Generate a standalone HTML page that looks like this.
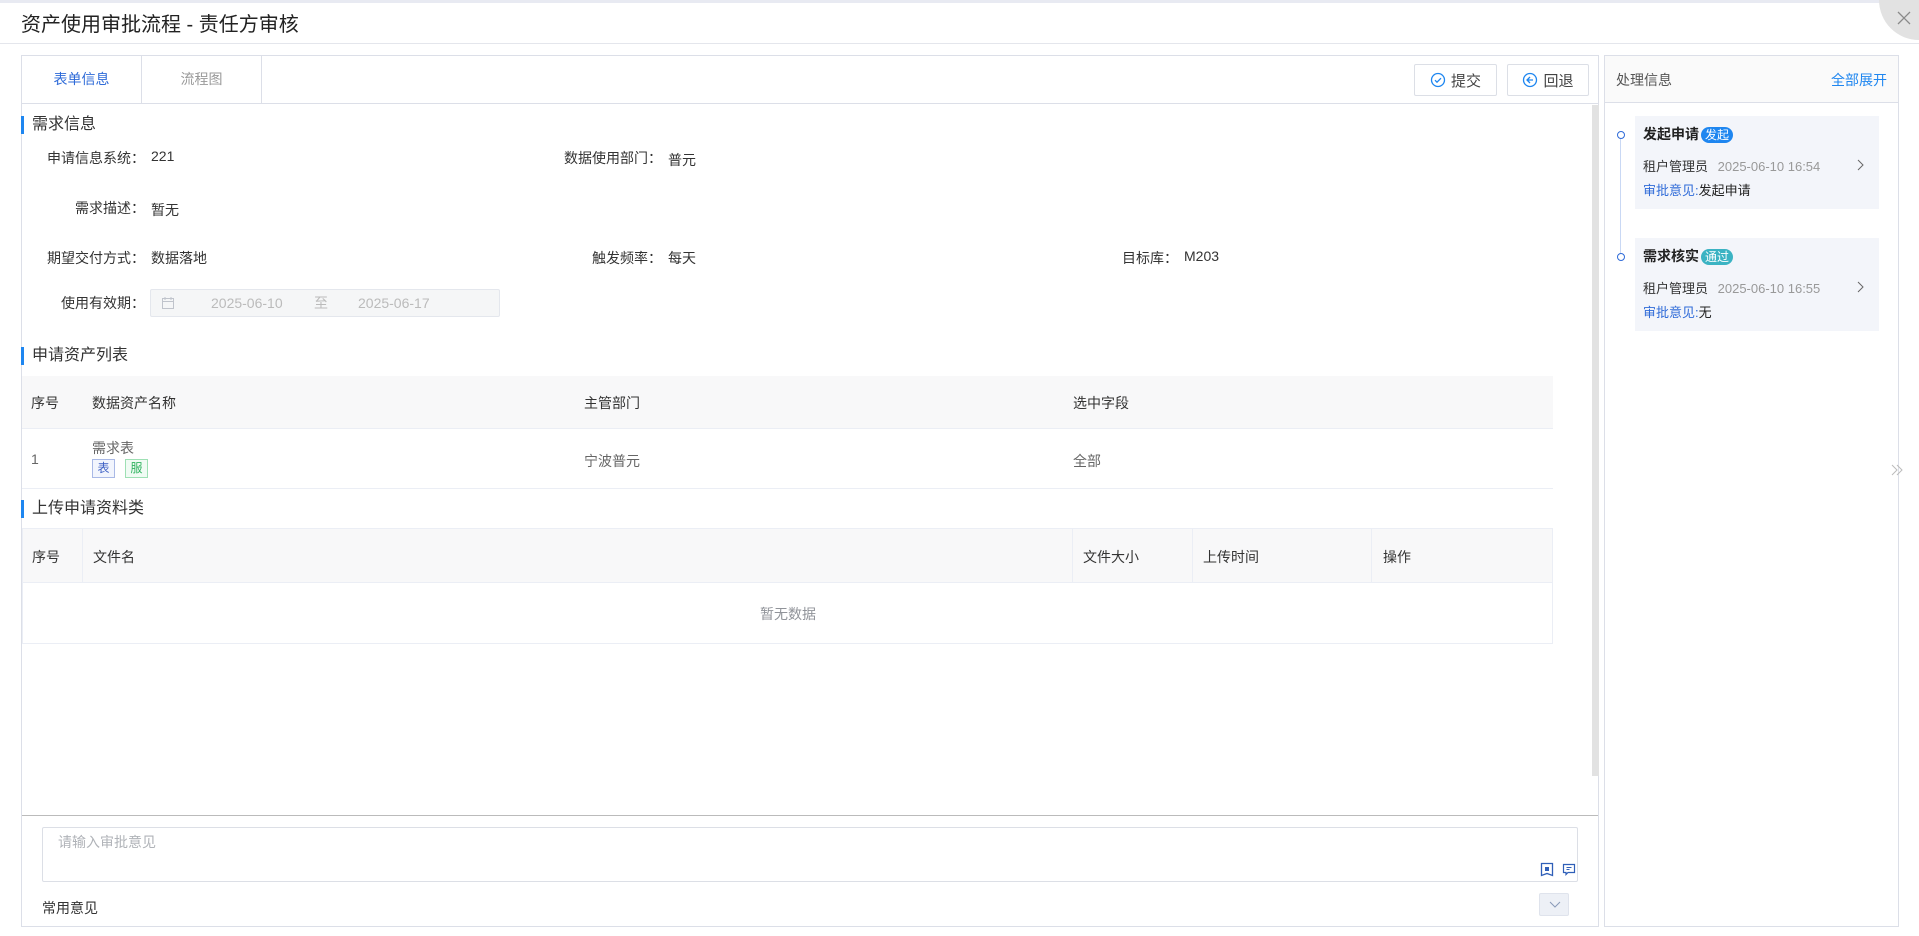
<!DOCTYPE html>
<html><head><meta charset="utf-8"><style>
*{box-sizing:border-box;margin:0;padding:0}
body{width:1919px;height:936px;background:#fff;font-family:"Liberation Sans","Noto Sans CJK SC",sans-serif;color:#333;position:relative;overflow:hidden;font-size:14px}
.abs{position:absolute}
.topline{left:0;top:0;width:1919px;height:3px;background:#e8eaf2}
.title{left:21px;top:10px;font-size:20px;color:#222;line-height:30px}
.hr{left:0;top:43px;width:1919px;height:1px;background:#e4e6ec}
.close{right:-40px;top:-40px;width:80px;height:80px;border-radius:50%;background:#e2e2e2}
.main{left:21px;top:55px;width:1578px;height:872px;border:1px solid #dcdfe8}
.tab{top:0;height:47px;line-height:47px;text-align:center;font-size:14px;border-right:1px solid #dcdfe8}
.tabrow{left:0;top:47px;width:1576px;height:1px;background:#dcdfe8}
.btn{top:8px;height:32px;border:1px solid #dcdfe6;border-radius:2px;background:#fff;font-size:15px;color:#444;display:flex;align-items:center;justify-content:center;gap:5px}
.sec{font-size:16px;color:#333;padding-left:8px;border-left:3px solid #1e86f0;line-height:18px}
.lab{font-size:14px;color:#333;text-align:right;width:200px}
.val{font-size:14px;color:#333}
.sb{left:1570px;top:49px;width:7px;height:671px;background:#e2e2e2}
.th{background:#f8f8f9}
.cell{font-size:14px}
.right{left:1604px;top:55px;width:295px;height:872px;border:1px solid #dcdfe8}
.card{left:30px;width:244px;height:93px;background:#f3f5fa}
.dot{left:12px;width:8px;height:8px;border:1.5px solid #2f6bd8;border-radius:50%;background:#fff}
.badge{display:inline-block;color:#fff;font-size:12px;border-radius:8px;padding:0 4px;line-height:16px;margin-left:2px;font-weight:normal}
</style></head><body>
<div class="abs topline"></div>
<div class="abs title">资产使用审批流程 - 责任方审核</div>
<div class="abs hr"></div>
<div class="abs close"></div>
<svg class="abs" style="left:1896px;top:10px" width="16" height="16"><path d="M2 2L14 14M14 2L2 14" stroke="#8a8a8a" stroke-width="1.3"/></svg>

<div class="abs main">
  <div class="abs tab" style="left:0;width:120px;color:#2f6bd8">表单信息</div>
  <div class="abs tab" style="left:120px;width:120px;color:#999">流程图</div>
  <div class="abs tabrow"></div>
  <div class="abs btn" style="left:1392px;width:83px"><svg width="16" height="16"><circle cx="8" cy="8" r="6.5" fill="none" stroke="#1e86f0" stroke-width="1.3"/><path d="M5 8.2l2 2 4-4" fill="none" stroke="#1e86f0" stroke-width="1.3"/></svg>提交</div>
  <div class="abs btn" style="left:1485px;width:82px"><svg width="16" height="16"><circle cx="8" cy="8" r="6.5" fill="none" stroke="#1e86f0" stroke-width="1.3"/><path d="M8 5l-3 3 3 3M5 8h6" fill="none" stroke="#1e86f0" stroke-width="1.3"/></svg>回退</div>
  <div class="abs sb"></div>

  <div class="abs sec" style="left:-1px;top:60px">需求信息</div>
  <div class="abs lab" style="left:-77px;top:92px">申请信息系统：</div><div class="abs val" style="left:129px;top:92px">221</div>
  <div class="abs lab" style="left:440px;top:92px">数据使用部门：</div><div class="abs val" style="left:646px;top:94px">普元</div>
  <div class="abs lab" style="left:-77px;top:142px">需求描述：</div><div class="abs val" style="left:129px;top:144px">暂无</div>
  <div class="abs lab" style="left:-77px;top:192px">期望交付方式：</div><div class="abs val" style="left:129px;top:192px">数据落地</div>
  <div class="abs lab" style="left:440px;top:192px">触发频率：</div><div class="abs val" style="left:646px;top:192px">每天</div>
  <div class="abs lab" style="left:956px;top:192px">目标库：</div><div class="abs val" style="left:1162px;top:192px">M203</div>
  <div class="abs lab" style="left:-77px;top:237px">使用有效期：</div>
  <div class="abs" style="left:128px;top:233px;width:350px;height:28px;background:#f5f6f7;border:1px solid #e4e7ed;border-radius:2px;color:#bbb;font-size:14px;line-height:26px">
    <svg class="abs" style="left:10px;top:6px" width="14" height="14"><rect x="1.5" y="2.5" width="11" height="10" fill="none" stroke="#c0c4cc"/><path d="M1.5 5.5h11M4 1v3M10 1v3" stroke="#c0c4cc"/></svg>
    <span class="abs" style="left:60px">2025-06-10</span><span class="abs" style="left:163px">至</span><span class="abs" style="left:207px">2025-06-17</span></div>

  <div class="abs sec" style="left:-1px;top:291px">申请资产列表</div>
  <div class="abs th" style="left:0;top:320px;width:1531px;height:53px;border-bottom:1px solid #ebeef5"></div>
  <div class="abs cell" style="left:9px;top:337px">序号</div>
  <div class="abs cell" style="left:70px;top:337px">数据资产名称</div>
  <div class="abs cell" style="left:562px;top:337px">主管部门</div>
  <div class="abs cell" style="left:1051px;top:337px">选中字段</div>
  <div class="abs" style="left:0;top:432px;width:1531px;height:1px;background:#ebeef5"></div>
  <div class="abs cell" style="left:9px;top:395px;color:#666">1</div>
  <div class="abs cell" style="left:70px;top:382px;color:#666">需求表</div>
  <div class="abs" style="left:70px;top:403px;width:23px;height:19px;border:1px solid #a9b9e6;background:#f2f5fd;color:#3c5fc4;font-size:12px;text-align:center;line-height:17px">表</div>
  <div class="abs" style="left:103px;top:403px;width:23px;height:19px;border:1px solid #9ee0b4;background:#f0fbf4;color:#2fb35f;font-size:12px;text-align:center;line-height:17px">服</div>
  <div class="abs cell" style="left:562px;top:395px;color:#666">宁波普元</div>
  <div class="abs cell" style="left:1051px;top:395px;color:#666">全部</div>

  <div class="abs sec" style="left:-1px;top:444px">上传申请资料类</div>
  <div class="abs" style="left:0;top:472px;width:1531px;height:116px;border:1px solid #ebeef5"></div>
  <div class="abs th" style="left:1px;top:473px;width:1529px;height:54px;border-bottom:1px solid #ebeef5"></div>
  <div class="abs" style="left:60px;top:473px;width:1px;height:54px;background:#ebeef5"></div>
  <div class="abs" style="left:1050px;top:473px;width:1px;height:54px;background:#ebeef5"></div>
  <div class="abs" style="left:1170px;top:473px;width:1px;height:54px;background:#ebeef5"></div>
  <div class="abs" style="left:1349px;top:473px;width:1px;height:54px;background:#ebeef5"></div>
  <div class="abs cell" style="left:10px;top:491px">序号</div>
  <div class="abs cell" style="left:71px;top:491px">文件名</div>
  <div class="abs cell" style="left:1061px;top:491px">文件大小</div>
  <div class="abs cell" style="left:1181px;top:491px">上传时间</div>
  <div class="abs cell" style="left:1361px;top:491px">操作</div>
  <div class="abs cell" style="left:738px;top:548px;color:#909399">暂无数据</div>

  <div class="abs" style="left:0;top:759px;width:1576px;height:1px;background:#bbb"></div>
  <div class="abs" style="left:20px;top:771px;width:1536px;height:55px;border:1px solid #dcdfe6;border-radius:2px"></div>
  <div class="abs" style="left:36px;top:776px;color:#b0b3b8;font-size:14px">请输入审批意见</div>
  <svg class="abs" style="left:1518px;top:806px" width="14" height="15"><path d="M1.5 1.5h11v12l-5.5-2-5.5 2z" fill="none" stroke="#2f5fb8" stroke-width="1.3"/><path d="M5 5h4v4H5z" fill="#2f5fb8"/></svg>
  <svg class="abs" style="left:1540px;top:807px" width="14" height="13"><path d="M1.5 1.5h11v8H6l-2 2v-2H1.5z" fill="none" stroke="#2f5fb8" stroke-width="1.2"/><path d="M4.5 4.5h5M4.5 6.5h3" stroke="#2f5fb8"/></svg>
  <div class="abs" style="left:20px;top:842px;font-size:14px;color:#333">常用意见</div>
  <div class="abs" style="left:1517px;top:837px;width:30px;height:23px;background:#edf0f6;border:1px solid #dfe3ec;border-radius:2px"><svg class="abs" style="left:9px;top:7px" width="12" height="8"><path d="M1 1l5 5 5-5" fill="none" stroke="#8a9ab8"/></svg></div>
</div>

<div class="abs right">
  <div class="abs" style="left:0;top:0;width:293px;height:47px;background:#fafafa;border-bottom:1px solid #dcdfe8"></div>
  <div class="abs" style="left:11px;top:14px;font-size:14px;color:#555">处理信息</div>
  <div class="abs" style="right:11px;top:14px;font-size:14px;color:#1e86f0">全部展开</div>
  <div class="abs" style="left:15px;top:80px;width:1px;height:122px;background:#c9d8f4"></div>
  <div class="abs dot" style="top:75px"></div>
  <div class="abs card" style="top:60px"></div>
  <div class="abs" style="left:38px;top:68px;font-size:14px;font-weight:bold;color:#222">发起申请<span class="badge" style="background:#1e86f0">发起</span></div>
  <div class="abs" style="left:38px;top:100px;font-size:13px;color:#333">租户管理员 <span style="color:#999;margin-left:6px">2025-06-10 16:54</span></div>
  <svg class="abs" style="left:251px;top:103px" width="8" height="12"><path d="M2 1l5 5-5 5" fill="none" stroke="#666"/></svg>
  <div class="abs" style="left:38px;top:124px;font-size:13px;color:#2f6bd8">审批意见:<span style="color:#222">发起申请</span></div>
  <div class="abs dot" style="top:197px"></div>
  <div class="abs card" style="top:182px"></div>
  <div class="abs" style="left:38px;top:190px;font-size:14px;font-weight:bold;color:#222">需求核实<span class="badge" style="background:#3bb3c3">通过</span></div>
  <div class="abs" style="left:38px;top:222px;font-size:13px;color:#333">租户管理员 <span style="color:#999;margin-left:6px">2025-06-10 16:55</span></div>
  <svg class="abs" style="left:251px;top:225px" width="8" height="12"><path d="M2 1l5 5-5 5" fill="none" stroke="#666"/></svg>
  <div class="abs" style="left:38px;top:246px;font-size:13px;color:#2f6bd8">审批意见:<span style="color:#222">无</span></div>
</div>
<svg class="abs" style="left:1890px;top:463px" width="14" height="14"><path d="M2 2l5 5-5 5M7 2l5 5-5 5" fill="none" stroke="#bbb"/></svg>
</body></html>
